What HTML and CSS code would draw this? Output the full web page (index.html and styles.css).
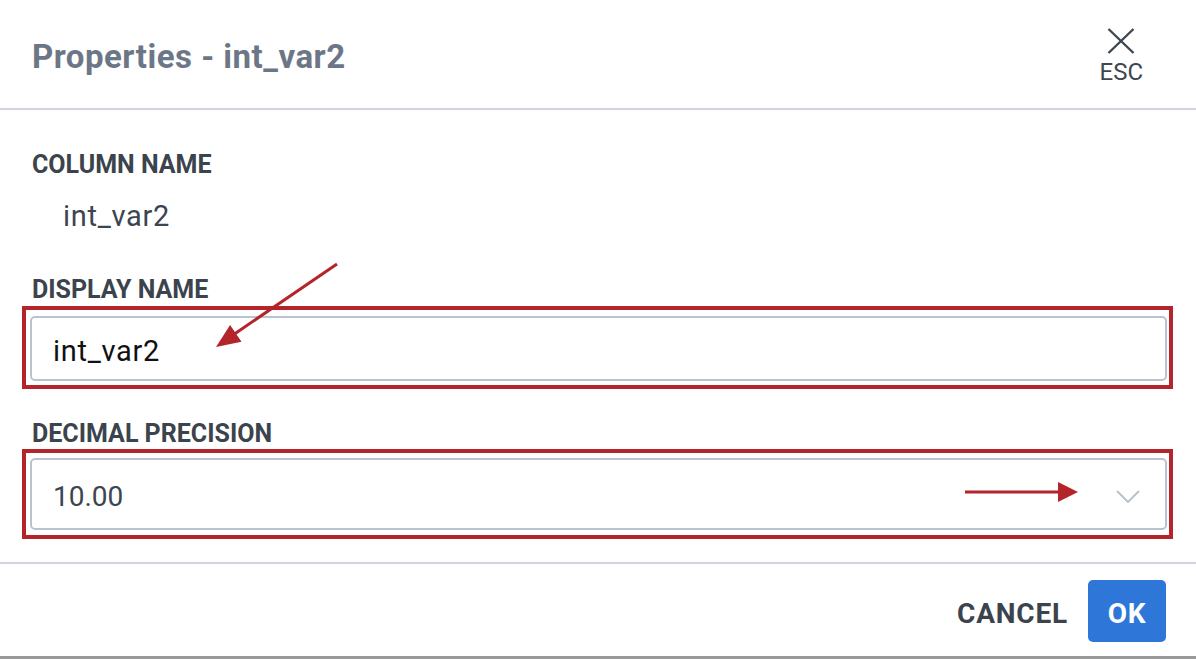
FILE: index.html
```html
<!DOCTYPE html>
<html lang="en">
<head>
  <meta charset="UTF-8">
  <title>Properties - int_var2</title>
  <link rel="stylesheet" href="styles.css">
</head>
<body>
  <div class="dialog">
    <div class="dialog-header">
      <h2 class="dialog-title">Properties - int_var2</h2>
      <button class="close-btn" type="button">
        <svg width="28" height="26" viewBox="0 0 28 26">
          <path d="M1.5 1 L26.5 25 M26.5 1 L1.5 25" stroke="#3d4651" stroke-width="2.4" fill="none"/>
        </svg>
        <span>ESC</span>
      </button>
    </div>

    <div class="dialog-body">
      <div class="field-label">COLUMN NAME</div>
      <div class="column-value">int_var2</div>

      <div class="field-label label-gap">DISPLAY NAME</div>
      <div class="highlight hl-input">
        <input class="text-input" type="text" value="int_var2">
      </div>

      <div class="field-label label-gap-small">DECIMAL PRECISION</div>
      <div class="highlight hl-select">
        <div class="select-box">
          <span>10.00</span>
          <svg width="24" height="13" viewBox="0 0 24 13">
            <path d="M1 1 L12 12 L23 1" stroke="#bac3cd" stroke-width="2" fill="none"/>
          </svg>
        </div>
      </div>
    </div>

    <div class="dialog-footer">
      <button class="btn-cancel" type="button">CANCEL</button>
      <button class="btn-ok" type="button">OK</button>
    </div>

    <!-- annotation arrows drawn over the dialog -->
    <svg class="arrows" width="1196" height="660" viewBox="0 0 1196 660">
      <line x1="337" y1="264" x2="233" y2="335" stroke="#b3242b" stroke-width="3"/>
      <polygon points="216,347 241.5,341.7 230.1,325.1" fill="#b3242b"/>
      <line x1="965" y1="492" x2="1062" y2="492" stroke="#b3242b" stroke-width="3"/>
      <polygon points="1058,482 1078,492 1058,502" fill="#b3242b"/>
    </svg>
  </div>
</body>
</html>
```

FILE: styles.css
```css
body {
  margin: 0;
  padding: 0;
  background: #fff;
  font-family: Roboto, 'Liberation Sans', sans-serif;
}

.dialog {
  position: relative;
  width: 1196px;
  background: #fff;
  border-bottom: 3px solid #999;
}

.dialog-header {
  height: 110px;
  border-bottom: 2px solid #d0d4dd;
  display: flex;
  align-items: center;
  justify-content: space-between;
  padding: 4px 53px 0 32px;
  box-sizing: border-box;
}

.dialog-title {
  margin: 0;
  font-size: 33px;
  line-height: 33px;
  font-weight: 700;
  letter-spacing: 0.5px;
  color: #6b7787;
}

.close-btn {
  align-self: flex-start;
  margin-top: 24px;
  padding: 0;
  border: none;
  background: none;
  display: flex;
  flex-direction: column;
  align-items: center;
  font-family: inherit;
  cursor: pointer;
}

.close-btn svg {
  display: block;
}

.close-btn span {
  margin-top: 6px;
  font-size: 24px;
  line-height: 24px;
  color: #3d4651;
}

.dialog-body {
  padding: 42px 23px 23px 22px;
}

.field-label {
  margin-left: 10px;
  font-size: 25px;
  line-height: 25px;
  font-weight: 700;
  color: #3b434d;
}

.column-value {
  margin: 26px 0 0 41px;
  font-size: 29px;
  line-height: 27px;
  letter-spacing: 0.7px;
  color: #3c4550;
}

.label-gap {
  margin-top: 47px;
}

.label-gap-small {
  margin-top: 32px;
}

.highlight {
  border: 4px solid #b3242b;
}

.hl-input {
  margin-top: 4px;
  padding: 6px 2px 4px 4px;
}

.hl-select {
  margin-top: 3px;
  padding: 5px 2px 5px 4px;
}

.text-input {
  display: block;
  width: 100%;
  height: 65px;
  box-sizing: border-box;
  border: 2px solid #bac3cd;
  border-radius: 5px;
  padding: 4px 21px 0;
  font-family: inherit;
  font-size: 29px;
  letter-spacing: 0.7px;
  color: #111;
  outline: none;
}

.select-box {
  height: 72px;
  box-sizing: border-box;
  border: 2px solid #bac3cd;
  border-radius: 5px;
  padding: 4px 25px 0 21px;
  display: flex;
  align-items: center;
  justify-content: space-between;
  font-size: 28px;
  color: #3c4550;
}

.dialog-footer {
  border-top: 2px solid #d0d4dd;
  height: 94px;
  box-sizing: border-box;
  padding: 16px 30px 0;
  display: flex;
  align-items: flex-start;
  justify-content: flex-end;
  gap: 20px;
}

.btn-cancel, .btn-ok {
  height: 62px;
  border: none;
  font-family: inherit;
  font-size: 28px;
  font-weight: 700;
  letter-spacing: 0.8px;
  padding: 4px 0 0;
  cursor: pointer;
}

.btn-cancel {
  background: none;
  color: #3b434d;
}

.btn-ok {
  width: 78px;
  background: #2e77d9;
  color: #fff;
  border-radius: 5px;
}

.arrows {
  position: absolute;
  left: 0;
  top: 0;
  pointer-events: none;
}
```
